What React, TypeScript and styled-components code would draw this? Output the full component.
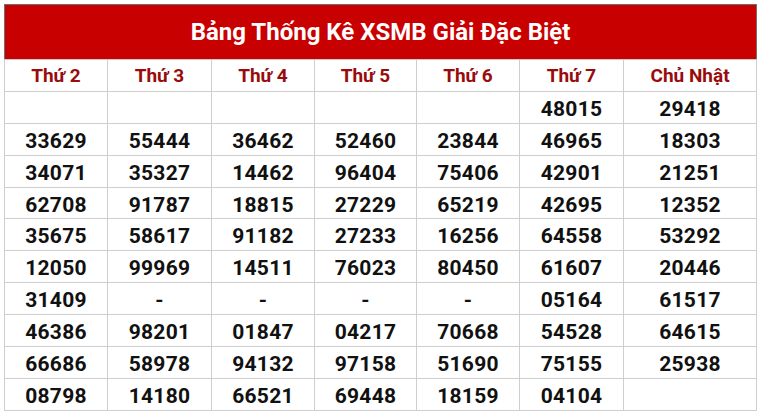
import { FunctionComponent } from "react";
import styled, { createGlobalStyle } from "styled-components";

const GlobalStyle = createGlobalStyle`
  html, body {
    margin: 0;
    padding: 0;
    background: #ffffff;
  }
  body {
    font-family: Roboto, "Liberation Sans", Arial, sans-serif;
  }
`;

const Page = styled.div`
  padding: 4px;
  width: 760px;
  box-sizing: border-box;
`;

const Table = styled.table`
  width: 752px;
  border-collapse: collapse;
  table-layout: fixed;
  border: 1px solid #707070;
`;

const Caption = styled.th`
  height: 54px;
  padding: 0;
  background: #c90000;
  color: #ffffff;
  font-size: 24px;
  font-weight: 700;
  text-align: center;
  border-bottom: 1px solid #c9c9c9;
`;

const DayCell = styled.th`
  height: 29.9px;
  padding: 1px 0 0;
  color: #990c0c;
  font-size: 19px;
  font-weight: 700;
  text-align: center;
  border: 1px solid #cfcfcf;
`;

const NumberCell = styled.td`
  height: 27.9px;
  padding: 3px 0 0;
  color: #111111;
  font-size: 21px;
  letter-spacing: 0.3px;
  font-weight: 700;
  text-align: center;
  border: 1px solid #cfcfcf;
`;

const days = ["Thứ 2", "Thứ 3", "Thứ 4", "Thứ 5", "Thứ 6", "Thứ 7", "Chủ Nhật"];

const rows: string[][] = [
  ["", "", "", "", "", "48015", "29418"],
  ["33629", "55444", "36462", "52460", "23844", "46965", "18303"],
  ["34071", "35327", "14462", "96404", "75406", "42901", "21251"],
  ["62708", "91787", "18815", "27229", "65219", "42695", "12352"],
  ["35675", "58617", "91182", "27233", "16256", "64558", "53292"],
  ["12050", "99969", "14511", "76023", "80450", "61607", "20446"],
  ["31409", "-", "-", "-", "-", "05164", "61517"],
  ["46386", "98201", "01847", "04217", "70668", "54528", "64615"],
  ["66686", "58978", "94132", "97158", "51690", "75155", "25938"],
  ["08798", "14180", "66521", "69448", "18159", "04104", ""],
];

const colWidths = [103, 104, 103, 102, 103, 104, 133];

const App: FunctionComponent = () => {
  return (
    <Page>
      <GlobalStyle />
      <Table>
        <colgroup>
          {colWidths.map((w, i) => (
            <col key={i} style={{ width: w }} />
          ))}
        </colgroup>
        <thead>
          <tr>
            <Caption colSpan={7}>Bảng Thống Kê XSMB Giải Đặc Biệt</Caption>
          </tr>
          <tr>
            {days.map((d) => (
              <DayCell key={d}>{d}</DayCell>
            ))}
          </tr>
        </thead>
        <tbody>
          {rows.map((row, r) => (
            <tr key={r}>
              {row.map((n, c) => (
                <NumberCell key={c}>{n}</NumberCell>
              ))}
            </tr>
          ))}
        </tbody>
      </Table>
    </Page>
  );
};

export default App;
